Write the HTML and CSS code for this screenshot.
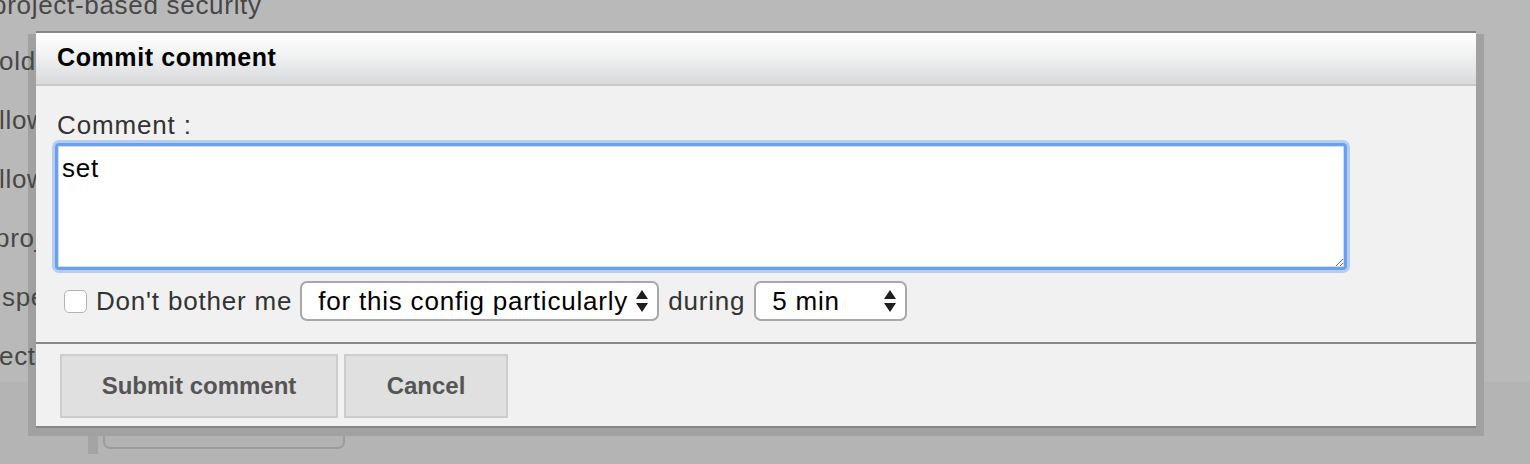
FILE: index.html
```html
<!DOCTYPE html>
<html lang="en">
<head>
<meta charset="utf-8">
<title>Commit comment</title>
<link rel="stylesheet" href="styles.css">
</head>
<body>
  <div class="page">
    <div class="page-top">
      <div class="page-title">project-based security</div>
      <ul class="side-list">
        <li>old</li>
        <li>llow</li>
        <li>llow</li>
        <li class="cut">project</li>
        <li class="shift">special</li>
        <li>ect</li>
      </ul>
    </div>
    <div class="page-bottom">
      <div class="bottom-inner">
        <div class="strip"></div>
        <div class="ghost-btn"></div>
      </div>
    </div>
  </div>

  <div class="dialog-shadow"></div>
  <div class="dialog">
    <div class="dialog-header">Commit comment</div>
    <div class="dialog-body">
      <label class="field-label" for="comment">Comment :</label>
      <textarea id="comment" class="comment-input">set</textarea>
      <div class="options-row">
        <span class="checkbox"></span>
        <span class="opt-text">Don't bother me</span>
        <div class="select select-scope">
          <span class="select-value">for this config particularly</span>
          <svg class="arrows" width="12" height="22" viewBox="0 0 12 22"><polygon points="0,9 6,0 12,9" fill="#1e1e1e"/><polygon points="0,13 12,13 6,22" fill="#1e1e1e"/></svg>
        </div>
        <span class="opt-text">during</span>
        <div class="select select-time">
          <span class="select-value">5 min</span>
          <svg class="arrows" width="12" height="22" viewBox="0 0 12 22"><polygon points="0,9 6,0 12,9" fill="#1e1e1e"/><polygon points="0,13 12,13 6,22" fill="#1e1e1e"/></svg>
        </div>
      </div>
    </div>
    <div class="dialog-footer">
      <button class="btn btn-submit">Submit comment</button>
      <button class="btn btn-cancel">Cancel</button>
    </div>
  </div>
</body>
</html>
```
FILE: styles.css
```css
html, body {
  margin: 0;
  padding: 0;
}
body {
  width: 1530px;
  height: 464px;
  overflow: hidden;
  position: relative;
  background: #b9b9b9;
  font-family: "Liberation Sans", Arial, Helvetica, sans-serif;
}

/* background page (dimmed) */
.page {
  height: 464px;
  display: flex;
  flex-direction: column;
}
.page-top {
  flex: 1;
  overflow: hidden;
  position: relative;
  z-index: 1;
  color: #474747;
  font-size: 26px;
  letter-spacing: 0.7px;
}
.page-title {
  line-height: 30px;
  margin-top: -10px;
  margin-left: -8px;
  white-space: nowrap;
}
.side-list {
  list-style: none;
  margin: 12px 0 0 0;
  padding: 0;
}
.side-list li {
  line-height: 59px;
  height: 59px;
  margin-left: -1px;
  white-space: nowrap;
}
.side-list li.cut {
  margin-left: -5px;
}
.side-list li.shift {
  margin-left: 2px;
}
.page-bottom {
  height: 82px;
  flex: none;
  background: #b4b4b4;
  padding-left: 88px;
}
.bottom-inner {
  display: flex;
  margin-top: 20px;
  height: 52px;
}
.strip {
  width: 10px;
  background: #a4a4a4;
}
.ghost-btn {
  margin-left: 5px;
  width: 242px;
  height: 47px;
  box-sizing: border-box;
  border: 2px solid #9d9d9d;
  border-radius: 7px;
  background: #b2b2b2;
}

/* dialog */
.dialog-shadow {
  position: absolute;
  left: 28px;
  top: 34px;
  width: 1456px;
  height: 402px;
  background: #a1a1a1;
  z-index: 0;
}
.dialog {
  position: absolute;
  z-index: 2;
  left: 36px;
  top: 31px;
  width: 1440px;
  border-top: 2px solid #868686;
  border-bottom: 2px solid #868686;
  background: #f1f1f1;
  display: flex;
  flex-direction: column;
}
.dialog-header {
  height: 53px;
  box-sizing: border-box;
  padding: 0 0 3px 21px;
  display: flex;
  align-items: center;
  background: linear-gradient(#ffffff, #f0f1f1 45%, #d8d9db);
  border-bottom: 2px solid #c9c9c9;
  font-weight: bold;
  font-size: 25px;
  letter-spacing: 0.6px;
  color: #000;
}
.dialog-body {
  height: 256px;
  box-sizing: border-box;
  padding: 24px 0 0 19px;
  display: flex;
  flex-direction: column;
  align-items: flex-start;
}
.field-label {
  margin-left: 2px;
  font-size: 26px;
  line-height: 30px;
  letter-spacing: 0.85px;
  color: #333;
}
.comment-input {
  margin: 3px 0 0 0;
  width: 1292px;
  height: 127px;
  box-sizing: border-box;
  padding: 7px 4px 4px;
  border: 3px solid #6f9fe7;
  border-radius: 4px;
  box-shadow: 0 0 0 3px #b3cdf3, inset 0 0 0 1px #c9dcf8;
  background: #fff;
  font-family: "Liberation Sans", Arial, Helvetica, sans-serif;
  font-size: 26px;
  letter-spacing: 0.8px;
  color: #000;
  outline: none;
  resize: both;
}
.options-row {
  margin-top: 11px;
  height: 40px;
  display: flex;
  align-items: center;
  font-size: 26px;
  letter-spacing: 0.8px;
  color: #333;
}
.checkbox {
  width: 23px;
  height: 23px;
  box-sizing: border-box;
  margin-left: 9px;
  margin-right: 9px;
  border: 1px solid #b3b3b3;
  border-radius: 5px;
  background: #fff;
}
.opt-text {
  white-space: nowrap;
}
.select {
  height: 40px;
  box-sizing: border-box;
  border: 2px solid #a8a8a8;
  border-radius: 7px;
  background: #fff;
  display: flex;
  align-items: center;
  color: #000;
  white-space: nowrap;
}
.select-scope {
  width: 359px;
  margin: 0 9px 0 8px;
  padding-left: 16px;
}
.select-time {
  width: 153px;
  margin-left: 9px;
  padding-left: 16px;
}
.select-value {
  flex: 1;
  overflow: hidden;
}
.arrows {
  flex: none;
  margin-right: 9px;
}

.dialog-footer {
  border-top: 2px solid #888;
  padding: 10px 0 8px 24px;
  display: flex;
  gap: 6px;
}
.btn {
  height: 64px;
  box-sizing: border-box;
  border: 2px solid #cdcdcd;
  background: #e0e0e0;
  color: #555;
  font-family: "Liberation Sans", Arial, Helvetica, sans-serif;
  font-weight: bold;
  font-size: 24px;
  letter-spacing: 0;
  padding: 0;
}
.btn-submit {
  width: 278px;
}
.btn-cancel {
  width: 164px;
}
```
